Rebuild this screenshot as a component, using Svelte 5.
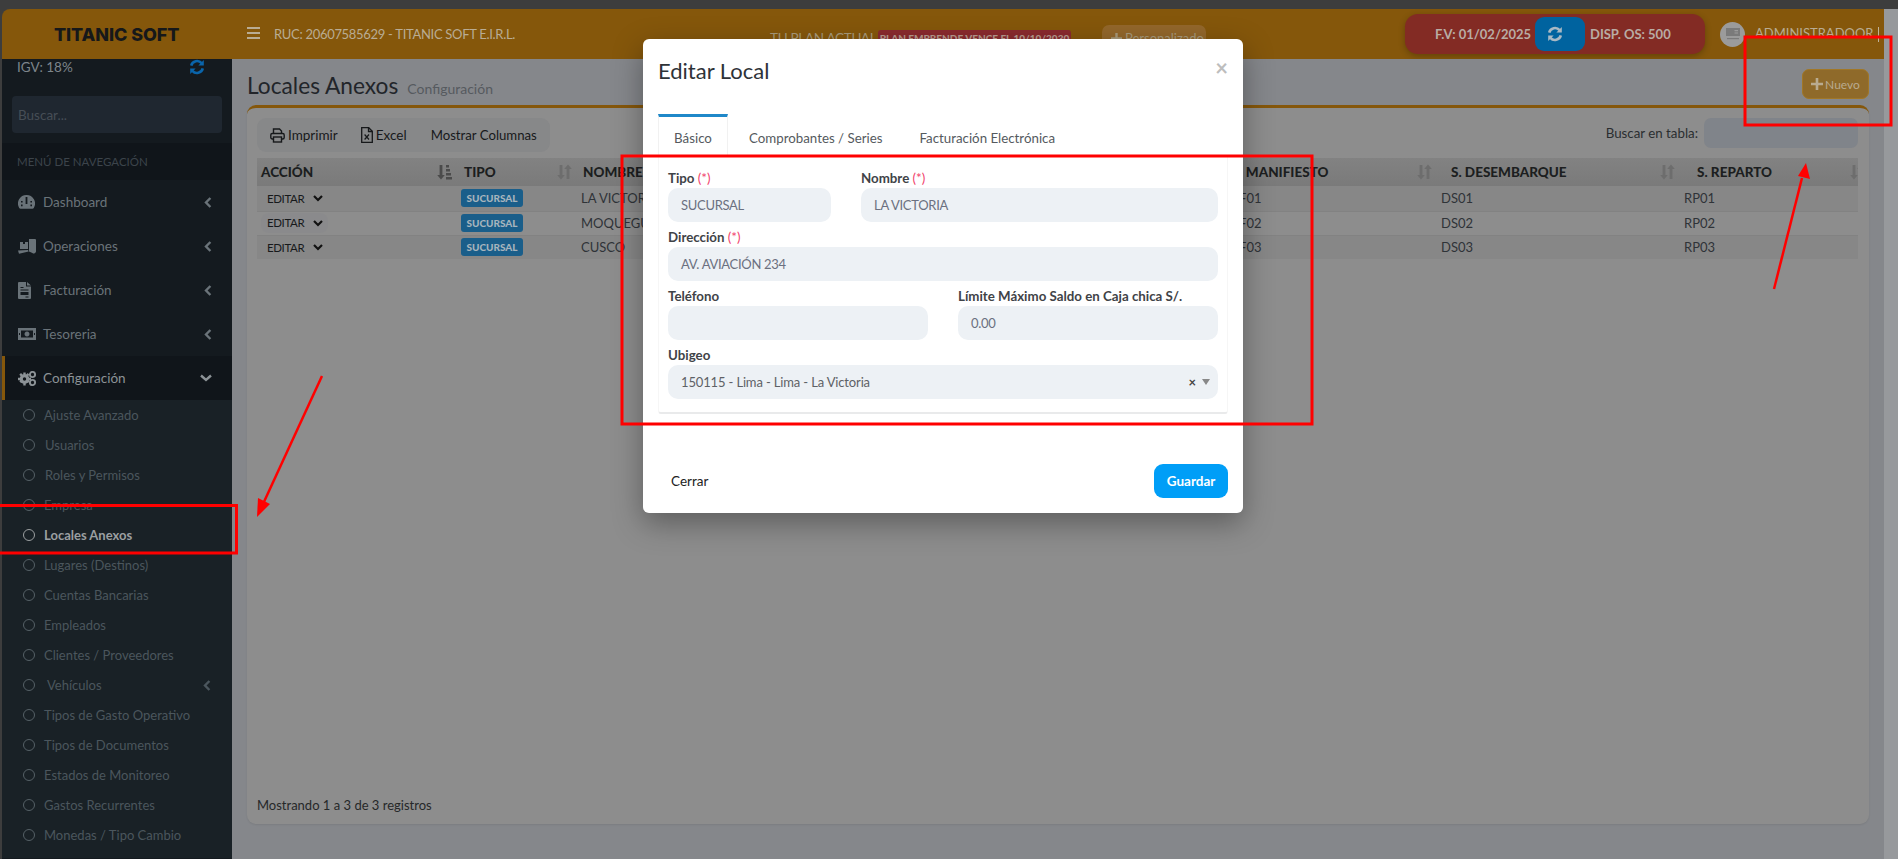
<script>
  const menu = [
    { label: 'Dashboard', icon: 'gauge' },
    { label: 'Operaciones', icon: 'truck' },
    { label: 'Facturación', icon: 'file' },
    { label: 'Tesoreria', icon: 'money' }
  ];

  const subMenu = [
    { label: 'Ajuste Avanzado' },
    { label: 'Usuarios', shift: 1 },
    { label: 'Roles y Permisos', shift: 1 },
    { label: 'Empresa' },
    { label: 'Locales Anexos', active: true },
    { label: 'Lugares (Destinos)' },
    { label: 'Cuentas Bancarias' },
    { label: 'Empleados' },
    { label: 'Clientes / Proveedores' },
    { label: 'Vehículos', shift: 2, arrow: true },
    { label: 'Tipos de Gasto Operativo' },
    { label: 'Tipos de Documentos' },
    { label: 'Estados de Monitoreo' },
    { label: 'Gastos Recurrentes' },
    { label: 'Monedas / Tipo Cambio' }
  ];

  const rows = [
    { nombre: 'LA VICTORIA', man: 'MF01', des: 'DS01', rep: 'RP01' },
    { nombre: 'MOQUEGUA', man: 'MF02', des: 'DS02', rep: 'RP02', hover: true },
    { nombre: 'CUSCO', man: 'MF03', des: 'DS03', rep: 'RP03' }
  ];

  const columns = [
    { label: 'ACCIÓN', cls: 'c-accion', sorted: true },
    { label: 'TIPO', cls: 'c-tipo' },
    { label: 'NOMBRE', cls: 'c-nombre' },
    { label: 'S. MANIFIESTO', cls: 'c-man' },
    { label: 'S. DESEMBARQUE', cls: 'c-des' },
    { label: 'S. REPARTO', cls: 'c-rep' }
  ];

  const tabs = ['Básico', 'Comprobantes / Series', 'Facturación Electrónica'];
</script>

{#snippet refresh(size)}
  <svg width={size} height={size} viewBox="0 0 16 16" fill="none" stroke="currentColor" stroke-width="2.6">
    <path d="M2.2 6.6A6 6 0 0 1 12.6 4.2" />
    <path d="M13.8 9.4A6 6 0 0 1 3.4 11.8" />
    <path d="M14.8 1v5.4H9.4z" fill="currentColor" stroke="none" />
    <path d="M1.2 15V9.6h5.4z" fill="currentColor" stroke="none" />
  </svg>
{/snippet}

{#snippet chevronLeft()}
  <svg class="chev" width="8" height="11" viewBox="0 0 8 11" fill="none" stroke="currentColor" stroke-width="2.4">
    <path d="M6.4 1 2 5.5 6.4 10" />
  </svg>
{/snippet}

{#snippet plus(size)}
  <svg width={size} height={size} viewBox="0 0 12 12" fill="currentColor">
    <path d="M4.7 0h2.6v4.7H12v2.6H7.3V12H4.7V7.3H0V4.7h4.7z" />
  </svg>
{/snippet}

{#snippet sortIcon(sorted)}
  {#if sorted}
    <svg class="sort dark" width="15" height="16" viewBox="0 0 15 16" fill="currentColor">
      <path d="M2.6 1h2.8v10h2.4L4 15.5.2 11h2.4z" />
      <path d="M9 1h3v2.5H9zM9 5h4v2.5H9zM9 9h5v2.5H9zM9 13h6v2.5H9z" />
    </svg>
  {:else}
    <svg class="sort" width="15" height="16" viewBox="0 0 15 16" fill="currentColor">
      <path d="M2.6 1h2.8v10h2.4L4 15.5.2 11h2.4z" />
      <path d="M9.6 15h2.8V5h2.4L11 .5 7.2 5h2.4z" />
    </svg>
  {/if}
{/snippet}

{#snippet menuIcon(name)}
  {#if name === 'gauge'}
    <svg width="17" height="15" viewBox="0 0 17 15" fill="currentColor">
      <path d="M8.5 0a8.5 8.5 0 0 0-7.3 12.9c.3.5.8.8 1.3.8h12c.5 0 1-.3 1.3-.8A8.5 8.5 0 0 0 8.5 0z" />
      <path d="M7.6 2h1.8v7H7.6zM3 6h1.6v1.6H3zM3 9.6h1.6v1.6H3zM12.4 6H14v1.6h-1.6zM12.4 9.6H14v1.6h-1.6z" fill="#141a1f" />
    </svg>
  {:else if name === 'truck'}
    <svg width="18" height="15" viewBox="0 0 18 15" fill="currentColor">
      <path d="M11 0h6a1 1 0 0 1 1 1v11.5a2.2 2.2 0 0 1-3.6 1.5L11 12.5z" />
      <path d="M2 3h3v2h2V3h3v7H2zM0 11.6 10 11l.6 1.5L1 14.8z" />
    </svg>
  {:else if name === 'file'}
    <svg width="13" height="17" viewBox="0 0 13 17" fill="currentColor">
      <path d="M0 1a1 1 0 0 1 1-1h7v4.5h5V16a1 1 0 0 1-1 1H1a1 1 0 0 1-1-1zM9 0l4 3.5H9z" />
      <path d="M2.5 5h3v1h-3zM2.5 7.5h8v1h-8zM2.5 10h8v3h-8zM7.5 14.5h3v1h-3z" fill="#141a1f" />
    </svg>
  {:else if name === 'money'}
    <svg width="18" height="12" viewBox="0 0 18 12" fill="currentColor">
      <path d="M0 0h18v12H0z" />
      <path d="M3 2.5h12v7H3z" fill="#141a1f" />
      <path d="M9 3.5a2.5 2.5 0 1 0 .01 0z" />
      <path d="M1 5h1v2H1zM16 5h1v2h-1z" fill="#141a1f" />
    </svg>
  {:else}
    <svg width="18" height="15" viewBox="0 0 18 15" fill="currentColor">
      <circle cx="6.5" cy="8" r="4.8" />
      <path d="M5.3 1.5h2.4v3H5.3zM5.3 11.5h2.4v3H5.3zM0 6.8h3v2.4H0zM10 6.8h3v2.4h-3zM1.3 3.8 3 2.1l2 2-1.7 1.7zM8 10l1.7-1.7 2 2L10 12zM9.7 2.1l1.7 1.7-2 2-1.7-1.700zM3 12l-1.7-1.700 2-2L5 10z" />
      <circle cx="6.5" cy="8" r="1.7" fill="#11161a" />
      <circle cx="14.5" cy="3.5" r="2.6" fill="none" stroke="currentColor" stroke-width="1.9" />
      <circle cx="14.5" cy="11.5" r="2.6" fill="none" stroke="currentColor" stroke-width="1.9" />
    </svg>
  {/if}
{/snippet}

<div class="page">
  <div class="shell">
    <header class="topbar">
      <div class="brand">TITANIC SOFT</div>
      <div class="hamburger"><span></span><span></span><span></span></div>
      <div class="ruc">RUC: 20607585629 - TITANIC SOFT E.I.R.L.</div>
      <div class="plan">
        <span class="plan-label">TU PLAN ACTUAL :</span>
        <span class="plan-badge">PLAN EMPRENDE VENCE EL 10/10/2030</span>
      </div>
      <span class="plan-btn">{@render plus(11)}Personalizado</span>
      <div class="status">
        <span class="fv">F.V: 01/02/2025</span>
        <span class="status-btn">{@render refresh(16)}</span>
        <span class="disp">DISP. OS: 500</span>
      </div>
      <span class="avatar">
        <svg width="14" height="12" viewBox="0 0 14 12" fill="#7a7a7a">
          <path d="M0 0h14v8H0z" />
          <path d="M8.5 2H12v1.2H8.5zM8.5 4.4H12v1.2H8.5z" fill="#9b9b9b" />
          <path d="M1 10h12v1.2H1z" />
        </svg>
      </span>
      <span class="user">ADMINISTRADOOR</span>
      <span class="caret"></span>
    </header>

    <div class="body">
      <aside class="sidebar">
        <div class="igv">
          <span>IGV: 18%</span>
          <span class="igv-icon">{@render refresh(16)}</span>
        </div>
        <div class="side-search">Buscar...</div>
        <div class="nav-title">MENÚ DE NAVEGACIÓN</div>
        {#each menu as item}
          <div class="nav-item">
            <span class="nav-icon">{@render menuIcon(item.icon)}</span>
            <span class="nav-label">{item.label}</span>
            {@render chevronLeft()}
          </div>
        {/each}
        <div class="nav-item open">
          <span class="nav-icon">{@render menuIcon('cogs')}</span>
          <span class="nav-label">Configuración</span>
          <svg class="chev" width="12" height="8" viewBox="0 0 12 8" fill="none" stroke="currentColor" stroke-width="2.4">
            <path d="M1 1.5 6 6l5-4.5" />
          </svg>
        </div>
        <div class="sub">
          {#each subMenu as item}
            <div class="sub-item" class:active={item.active}>
              <span class="dot"></span>
              <span class="sub-label" class:s1={item.shift === 1} class:s2={item.shift === 2}>{item.label}</span>
              {#if item.arrow}{@render chevronLeft()}{/if}
            </div>
          {/each}
        </div>
      </aside>

      <main class="content">
        <div class="title-row">
          <h1>Locales Anexos</h1>
          <small>Configuración</small>
          <button class="btn-new">{@render plus(12)}Nuevo</button>
        </div>

        <section class="card">
          <div class="tools">
            <div class="tool-group">
              <span class="tool">
                <svg width="15" height="15" viewBox="0 0 15 15" fill="none" stroke="#17191b" stroke-width="1.4">
                  <path d="M3.5 5.5V1h6l2 2v2.500" />
                  <rect x="0.8" y="5.5" width="13.4" height="5.5" rx="1.5" />
                  <rect x="3.5" y="9" width="8" height="5" fill="#878889" />
                </svg>
                Imprimir
              </span>
              <span class="tool excel">
                <svg width="12" height="16" viewBox="0 0 12 16" fill="none" stroke="#17191b" stroke-width="1.3">
                  <path d="M.7.7h7l3.600 3.600v11H.7z" />
                  <path d="M7.5.7v3.800h3.800" />
                  <path d="M3.6 7.5l4.400 5M8 7.5l-4.400 5" stroke-width="1.2" />
                </svg>
                Excel
              </span>
              <span class="tool cols">Mostrar Columnas</span>
            </div>
            <div class="table-search">
              <span>Buscar en tabla:</span>
              <div class="table-input"></div>
            </div>
          </div>

          <table>
            <thead>
              <tr>
                {#each columns as col}
                  <th class={col.cls}>
                    <div class="th-inner">
                      <span>{col.label}</span>
                      {@render sortIcon(col.sorted)}
                    </div>
                  </th>
                {/each}
              </tr>
            </thead>
            <tbody>
              {#each rows as row}
                <tr>
                  <td class="c-accion">
                    <span class="editar" class:hover={row.hover}>
                      EDITAR
                      <svg width="10" height="7" viewBox="0 0 10 7" fill="none" stroke="#111" stroke-width="2.2">
                        <path d="M1 1l4 4 4-4" />
                      </svg>
                    </span>
                  </td>
                  <td class="c-tipo"><span class="badge">SUCURSAL</span></td>
                  <td class="c-nombre">{row.nombre}</td>
                  <td class="c-man">{row.man}</td>
                  <td class="c-des">{row.des}</td>
                  <td class="c-rep">{row.rep}</td>
                </tr>
              {/each}
            </tbody>
          </table>

          <div class="info">Mostrando 1 a 3 de 3 registros</div>
        </section>
      </main>
    </div>
  </div>
  <div class="scrollbar"></div>

  <div class="modal">
    <div class="modal-head">
      <h2>Editar Local</h2>
      <span class="close">×</span>
    </div>
    <div class="tabs">
      {#each tabs as tab, i}
        <span class="tab" class:on={i === 0}>{tab}</span>
      {/each}
    </div>
    <div class="panel">
      <div class="form-row">
        <label class="tipo">
          <span>Tipo <em>(*)</em></span>
          <div class="field">SUCURSAL</div>
        </label>
        <label class="grow">
          <span>Nombre <em>(*)</em></span>
          <div class="field">LA VICTORIA</div>
        </label>
      </div>
      <div class="form-row">
        <label class="grow">
          <span>Dirección <em>(*)</em></span>
          <div class="field">AV. AVIACIÓN 234</div>
        </label>
      </div>
      <div class="form-row">
        <label class="grow">
          <span>Teléfono</span>
          <div class="field"></div>
        </label>
        <label class="grow">
          <span>Límite Máximo Saldo en Caja chica S/.</span>
          <div class="field">0.00</div>
        </label>
      </div>
      <div class="form-row">
        <label class="grow">
          <span>Ubigeo</span>
          <div class="field select">
            <span class="select-text">150115 - Lima - Lima - La Victoria</span>
            <span class="clear">×</span>
            <span class="arrow"></span>
          </div>
        </label>
      </div>
    </div>
    <div class="modal-foot">
      <button class="btn-close">Cerrar</button>
      <button class="btn-save">Guardar</button>
    </div>
  </div>

  <svg class="marks" width="1898" height="859" viewBox="0 0 1898 859" fill="none">
    <rect x="622" y="156" width="690" height="268" stroke="#ff0000" stroke-width="3" />
    <rect x="1745" y="37" width="146" height="88" stroke="#ff0000" stroke-width="3" />
    <path d="M0 505.5H236.5V553H0" stroke="#ff0000" stroke-width="3" />
    <path d="M322 376 263 504" stroke="#ff0000" stroke-width="2.5" />
    <path d="M257 517 258 498 270 504z" fill="#ff0000" />
    <path d="M1774 289 1802 178" stroke="#ff0000" stroke-width="2.5" />
    <path d="M1806 163 1810 179 1798 176z" fill="#ff0000" />
  </svg>
</div>

<style>
  :global(body) {
    margin: 0;
    font-family: Lato, "Liberation Sans", sans-serif;
  }

  .page {
    position: relative;
    display: flex;
    width: 1898px;
    height: 859px;
    box-sizing: border-box;
    padding: 9px 0 0 2px;
    overflow: hidden;
    background: #3d3d3d;
    font-size: 13px;
    color: #2a2d30;
  }

  .shell {
    flex: 1;
    min-width: 0;
    display: flex;
    flex-direction: column;
  }

  .scrollbar {
    width: 14px;
    background: #97999c;
  }

  .topbar {
    flex: none;
    height: 50px;
    display: flex;
    align-items: center;
    background: #85570b;
    border-radius: 8px 0 0 0;
    color: #b9ac93;
  }

  .brand {
    flex: none;
    width: 230px;
    box-sizing: border-box;
    padding-left: 52px;
    font-family: Inter, Lato, sans-serif;
    font-size: 18px;
    font-weight: 800;
    letter-spacing: -0.1px;
    color: #16181a;
    white-space: nowrap;
  }

  .hamburger {
    flex: none;
    display: flex;
    flex-direction: column;
    gap: 2.5px;
    width: 13px;
    margin: -2px 14px 0 15px;
  }

  .hamburger span {
    height: 2.5px;
    background: #b9ac93;
  }

  .ruc {
    flex: none;
    width: 496px;
    font-size: 13px;
    letter-spacing: -0.3px;
    white-space: nowrap;
  }

  .plan {
    flex: none;
    display: flex;
    align-items: center;
    width: 332px;
    margin-top: 8px;
  }

  .plan-label {
    flex: none;
    width: 108px;
    font-size: 13.5px;
    letter-spacing: -0.3px;
    color: #a89a7c;
    white-space: nowrap;
  }

  .plan-badge {
    flex: none;
    box-sizing: border-box;
    width: 193px;
    height: 16px;
    line-height: 16px;
    text-align: center;
    background: #8a2a2e;
    border-radius: 3px;
    font-size: 10px;
    font-weight: 900;
    color: #b99b8f;
    white-space: nowrap;
  }

  .plan-btn {
    flex: none;
    display: flex;
    align-items: center;
    gap: 3px;
    box-sizing: border-box;
    width: 104px;
    height: 26px;
    padding-left: 9px;
    margin-top: 8px;
    background: #93672b;
    border-radius: 7px;
    font-size: 13px;
    color: #a89a7c;
  }

  .status {
    flex: none;
    display: flex;
    align-items: center;
    height: 40px;
    width: 300px;
    box-sizing: border-box;
    margin-left: 199px;
    margin-top: -1px;
    padding-left: 30px;
    background: #832b24;
    border-radius: 13px;
    box-shadow: 0 2px 6px rgba(0, 0, 0, 0.25);
    font-size: 13px;
    font-weight: 700;
    color: #b9aca4;
    white-space: nowrap;
  }

  .fv {
    width: 100px;
  }

  .status-btn {
    display: flex;
    align-items: center;
    box-sizing: border-box;
    width: 50px;
    height: 34px;
    padding-left: 12px;
    background: #00639f;
    border-radius: 9px;
    color: #a9b9c4;
  }

  .disp {
    margin-left: 5px;
  }

  .avatar {
    flex: none;
    display: flex;
    align-items: center;
    justify-content: center;
    width: 25px;
    height: 25px;
    margin-left: 15px;
    border-radius: 50%;
    background: #9b9b9b;
  }

  .user {
    margin-left: 10px;
    font-size: 13px;
    color: #b9ac93;
    margin-top: -3px;
  }

  .caret {
    width: 1px;
    height: 15px;
    margin-left: 5px;
    background: #c0b39b;
  }

  .body {
    flex: 1;
    min-height: 0;
    display: flex;
  }

  .sidebar {
    flex: none;
    width: 230px;
    background: #141a1f;
  }

  .igv {
    display: flex;
    align-items: center;
    justify-content: space-between;
    height: 16px;
    padding: 0 27px 0 15px;
    color: #7d858b;
    font-size: 13.5px;
  }

  .igv-icon {
    display: flex;
    color: #0a64aa;
  }

  .side-search {
    box-sizing: border-box;
    height: 37px;
    margin: 21px 10px 10px;
    padding: 11px 6px 0;
    background: #1f2730;
    border-radius: 4px;
    color: #464e56;
    font-size: 13.5px;
  }

  .nav-title {
    height: 37px;
    padding-left: 15px;
    line-height: 37px;
    background: #10151a;
    font-size: 11.5px;
    color: #3c444b;
  }

  .nav-item {
    display: flex;
    align-items: center;
    height: 44px;
    padding-left: 16px;
    padding-right: 20px;
    color: #6a7379;
  }

  .nav-item.open {
    box-sizing: border-box;
    padding-left: 13px;
    border-left: 3px solid #85570b;
    background: #10151a;
    color: #8c9296;
  }

  .nav-icon {
    display: flex;
    align-items: center;
    width: 25px;
  }

  .nav-label {
    flex: 1;
    margin-top: -1px;
    font-size: 13.5px;
  }

  .sub {
    background: #192126;
    padding-bottom: 8px;
  }

  .sub-item {
    display: flex;
    align-items: center;
    height: 30px;
    padding-left: 21px;
    padding-right: 21px;
    font-size: 13px;
    color: #4b565d;
  }

  .sub-item.active {
    color: #9b9fa1;
    font-weight: 700;
  }

  .dot {
    flex: none;
    box-sizing: border-box;
    width: 12px;
    height: 12px;
    margin-right: 9px;
    border: 1.5px solid #556066;
    border-radius: 50%;
  }

  .active .dot {
    border-color: #9b9fa1;
  }

  .sub-label {
    flex: 1;
    white-space: nowrap;
  }

  .s1 {
    padding-left: 1px;
  }

  .s2 {
    padding-left: 3px;
  }

  .content {
    flex: 1;
    min-width: 0;
    padding: 0 15px;
    background: #85878b;
  }

  .title-row {
    display: flex;
    align-items: baseline;
    height: 46px;
    position: relative;
  }

  h1 {
    margin: 13px 0 0;
    font-size: 22.7px;
    font-weight: 400;
    color: #22252a;
  }

  small {
    margin-left: 9px;
    font-size: 14px;
    color: #565a5f;
  }

  .btn-new {
    position: absolute;
    right: 0;
    top: 10px;
    display: flex;
    align-items: center;
    justify-content: center;
    gap: 2px;
    box-sizing: border-box;
    width: 67px;
    height: 30px;
    padding: 0;
    border: 1px solid #a17726;
    border-radius: 7px;
    background: #8f6a2a;
    color: #b9ab90;
    font-family: inherit;
    font-size: 12px;
  }

  .card {
    box-sizing: border-box;
    height: 719px;
    display: flex;
    flex-direction: column;
    padding: 10px 11px 10px 10px;
    background: #8d8d8d;
    border-top: 3px solid #85570b;
    border-radius: 9px;
    box-shadow: 0 1px 2px rgba(0, 0, 0, 0.08);
  }

  .tools {
    display: flex;
    justify-content: space-between;
    align-items: flex-start;
    height: 40px;
  }

  .tool-group {
    display: flex;
    align-items: center;
    box-sizing: border-box;
    width: 293px;
    height: 34px;
    padding-left: 13px;
    background: #878889;
    border-radius: 9px;
    color: #17191b;
    font-size: 13.5px;
  }

  .tool {
    display: flex;
    align-items: center;
    gap: 3px;
  }

  .excel {
    margin-left: 23px;
  }

  .cols {
    margin-left: 24px;
    font-size: 13.2px;
  }

  .table-search {
    display: flex;
    align-items: center;
    gap: 6px;
    color: #2a2d30;
    font-size: 13.3px;
  }

  .table-input {
    width: 154px;
    height: 30px;
    background: #80848a;
    border-radius: 7px;
  }

  table {
    width: 1601px;
    border-collapse: collapse;
    table-layout: fixed;
    font-size: 13px;
  }

  th,
  td {
    box-sizing: border-box;
  }

  th {
    height: 28px;
    padding: 0;
    background: linear-gradient(#828282, #7a7a7a);
    font-size: 13.5px;
    font-weight: 900;
    text-align: left;
    color: #1c1e20;
    overflow: hidden;
  }

  .th-inner {
    display: flex;
    align-items: center;
    justify-content: space-between;
    padding-right: 5px;
    white-space: nowrap;
  }

  .c-rep .th-inner {
    padding-right: 0;
    margin-right: -7px;
  }

  .sort {
    color: #6d6d6d;
    flex: none;
  }

  .sort.dark {
    color: #4b4b4b;
  }

  td {
    height: 24px;
    padding: 0;
    line-height: 1;
    color: #2f3338;
    border-top: 1px solid #828282;
    white-space: nowrap;
  }

  tbody tr:first-child td {
    height: 25px;
    border-top: 0;
  }

  tbody tr:nth-child(odd) td {
    background: #878787;
  }

  .c-accion {
    width: 200px;
    padding-left: 4px;
  }

  .c-tipo {
    width: 120px;
    padding-left: 7px;
  }

  .c-nombre {
    width: 629px;
    padding-left: 6px;
  }

  .c-man {
    width: 231px;
    padding-left: 26px;
  }

  .c-des {
    width: 243px;
    padding-left: 14px;
  }

  .c-rep {
    width: 178px;
    padding-left: 17px;
  }

  td.c-tipo,
  td.c-nombre,
  td.c-des,
  td.c-rep {
    padding-left: 4px;
  }

  td.c-man {
    padding-left: 21px;
  }

  .editar {
    display: inline-flex;
    align-items: center;
    gap: 9px;
    width: 67px;
    box-sizing: border-box;
    height: 20px;
    padding-left: 6px;
    border-radius: 8px;
    font-size: 11.5px;
    letter-spacing: -0.4px;
    color: #17191b;
    vertical-align: middle;
  }

  .editar.hover {
    background: #8a8a8c;
  }

  .badge {
    display: inline-block;
    width: 62px;
    height: 18px;
    line-height: 18px;
    text-align: center;
    background: #1a5e8a;
    border-radius: 3px;
    font-size: 10px;
    font-weight: 900;
    color: #a6b4bd;
    vertical-align: middle;
  }

  .info {
    margin-top: auto;
    margin-bottom: 1px;
    font-size: 13px;
    color: #262829;
  }

  .modal {
    position: absolute;
    left: 643px;
    top: 39px;
    box-sizing: border-box;
    width: 600px;
    height: 474px;
    padding: 0 15px;
    background: #fff;
    border-radius: 6px;
    box-shadow: 0 10px 30px rgba(0, 0, 0, 0.35);
    color: #444;
  }

  .modal-head {
    display: flex;
    justify-content: space-between;
    height: 75px;
  }

  h2 {
    margin: 18px 0 0;
    font-size: 22px;
    font-weight: 400;
    color: #2e3338;
  }

  .close {
    margin: 18px 0 0;
    font-size: 22px;
    font-weight: 700;
    color: #bdbdbd;
    line-height: 1;
  }

  .tabs {
    display: flex;
    height: 41px;
    font-size: 13.3px;
    color: #555a5e;
  }

  .tab {
    padding: 16px 16px 0;
    margin-right: 5px;
    box-sizing: border-box;
    white-space: nowrap;
  }

  .tab.on {
    width: 70px;
    padding: 13px 0 0;
    text-align: center;
    border-top: 3px solid #1f88c9;
    border-left: 1px solid #f1f1f1;
    border-right: 1px solid #f1f1f1;
    margin-right: 5px;
  }

  .panel {
    box-sizing: border-box;
    height: 259px;
    padding: 14px 9px 0;
    border: 1px solid #f6f6f6;
    border-top: 0;
    border-bottom: 2px solid #e9eaeb;
    border-radius: 0 0 3px 3px;
  }

  .form-row {
    display: flex;
    gap: 30px;
    margin-bottom: 6px;
  }

  label {
    display: flex;
    flex-direction: column;
    font-size: 13.3px;
    font-weight: 700;
    color: #3f4347;
  }

  label > span {
    line-height: 19px;
  }

  em {
    font-style: normal;
    font-weight: 400;
    color: #f1416c;
  }

  .tipo {
    width: 163px;
    flex: none;
  }

  .grow {
    flex: 1;
    min-width: 0;
  }

  .field {
    box-sizing: border-box;
    height: 34px;
    padding: 0 13px;
    line-height: 34px;
    background: #edf1f5;
    border-radius: 10px;
    font-size: 13px;
    font-weight: 400;
    letter-spacing: -0.3px;
    color: #6b7080;
  }

  .select {
    display: flex;
    align-items: center;
    padding-right: 8px;
    letter-spacing: -0.15px;
    color: #5e6166;
  }

  .select-text {
    flex: 1;
  }

  .clear {
    margin-right: 6px;
    font-weight: 700;
    color: #444;
  }

  .arrow {
    width: 0;
    height: 0;
    border-left: 4px solid transparent;
    border-right: 4px solid transparent;
    border-top: 6px solid #888;
  }

  .modal-foot {
    display: flex;
    justify-content: space-between;
    align-items: center;
    margin-top: 50px;
  }

  .btn-close,
  .btn-save {
    height: 34px;
    border: none;
    font-family: inherit;
    font-size: 13.5px;
  }

  .btn-close {
    padding: 0 13px;
    background: none;
    color: #222;
  }

  .btn-save {
    width: 74px;
    padding: 0;
    background: #009ef7;
    border-radius: 9px;
    color: #fff;
    font-weight: 700;
  }

  .marks {
    position: absolute;
    left: 0;
    top: 0;
    pointer-events: none;
  }
</style>
